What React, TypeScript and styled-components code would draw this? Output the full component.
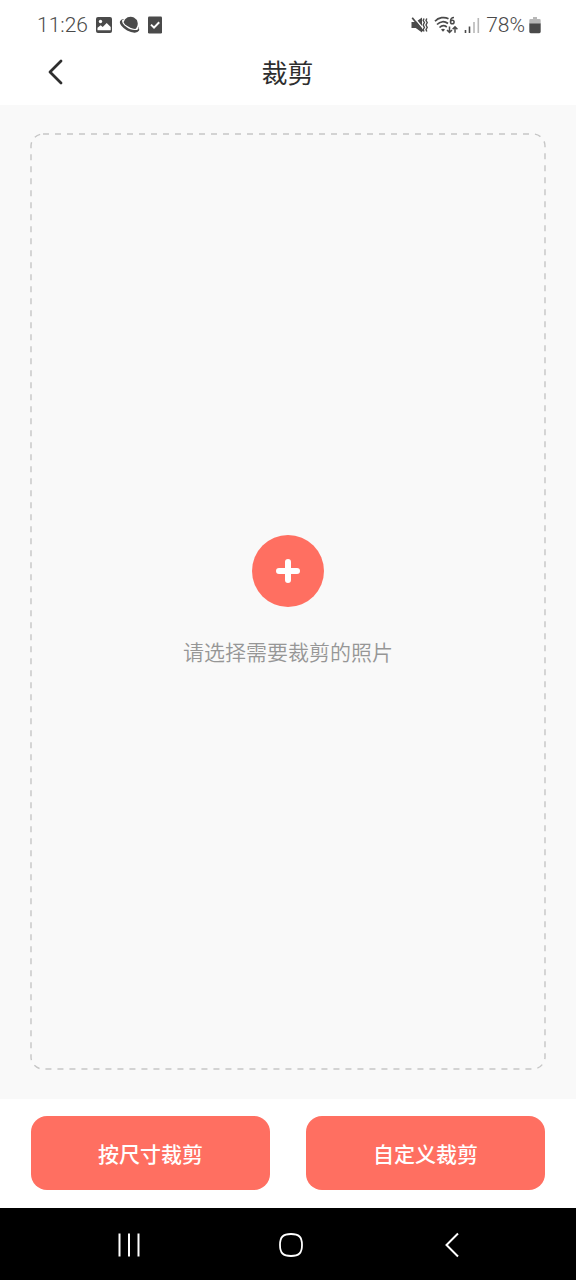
import React from "react";
import styled, { createGlobalStyle } from "styled-components";

const coral = "#ff6f61";
const ink = "#2e2e2e";
const statusInk = "#4a4a4a";

const GlobalStyle = createGlobalStyle`
  *, *::before, *::after { box-sizing: border-box; }
  body {
    margin: 0;
    background: #fff;
    font-family: Roboto, "Noto Sans CJK SC", sans-serif;
  }
  button { font-family: inherit; cursor: pointer; }
  svg { display: block; flex: none; }
`;

const Screen = styled.div`
  display: flex;
  flex-direction: column;
  min-height: 100vh;
  background: #fff;
`;

const StatusBar = styled.div`
  display: flex;
  justify-content: space-between;
  height: 49px;
  padding: 0 35px 0 37px;
  color: ${statusInk};
  font-size: 21px;
  font-weight: 300;
  line-height: 24px;
`;

const StatusGroup = styled.div<{ $gap: number }>`
  display: flex;
  align-items: center;
  gap: ${(p) => p.$gap}px;
`;

const Header = styled.header`
  display: grid;
  grid-template-columns: 48px 1fr 48px;
  align-items: center;
  height: 56px;
  padding: 0 32px 10px 31px;
`;

const BackButton = styled.button`
  display: grid;
  place-items: center;
  width: 48px;
  height: 46px;
  padding: 0;
  border: 0;
  background: none;
  color: ${ink};
`;

const Title = styled.h1`
  margin: 0;
  padding-top: 4px;
  color: ${ink};
  font-size: 26px;
  font-weight: 400;
  line-height: 40px;
  text-align: center;
`;

const Stage = styled.main`
  display: flex;
  flex: 1;
  padding: 28px 30px 29px;
  background: #f9f9f9;
`;

const DropArea = styled.section`
  position: relative;
  display: flex;
  flex: 1;
  flex-direction: column;
  align-items: center;
  justify-content: center;
  gap: 30px;
  padding-top: 1px;
`;

const DashedOutline = styled.svg`
  position: absolute;
  inset: 0;
  width: 100%;
  height: 100%;
  padding: 1px;
  overflow: visible;
  pointer-events: none;
`;

const AddButton = styled.button`
  display: grid;
  place-items: center;
  width: 72px;
  height: 72px;
  padding: 0;
  border: 0;
  border-radius: 50%;
  background: ${coral};
  color: #fff;
`;

const Hint = styled.p`
  margin: 0;
  color: #969696;
  font-size: 21px;
  font-weight: 350;
  line-height: 32px;
`;

const Actions = styled.footer`
  display: flex;
  gap: 36px;
  padding: 17px 31px 18px;
`;

const ActionButton = styled.button`
  flex: 1;
  height: 74px;
  padding: 4px 0 0;
  border: 0;
  border-radius: 16px;
  background: ${coral};
  color: #fff;
  font-size: 21px;
  font-weight: 500;
  line-height: 32px;
`;

const SystemNav = styled.nav`
  display: flex;
  align-items: center;
  justify-content: space-between;
  height: 72px;
  padding: 1px 100px 0 105px;
  background: #000;
`;

const NavButton = styled.button`
  display: grid;
  place-items: center;
  width: 48px;
  height: 48px;
  padding: 0;
  border: 0;
  background: none;
  color: #fff;
`;

const PictureIcon = () => (
  <svg width="18" height="18" viewBox="0 0 18 18" aria-hidden="true">
    <rect x="1" y="1" width="16" height="16" rx="2" fill={statusInk} />
    <circle cx="5.5" cy="5.5" r="1.7" fill="#fff" />
    <path d="M2.5 14.2v-2.4l3.2-2.6 2 1.7 4-4 4 4v3.3z" fill="#fff" />
  </svg>
);

const PlanetIcon = () => (
  <svg width="22" height="18" viewBox="0 0 22 18" aria-hidden="true">
    <g transform="rotate(28 11 9)">
      <ellipse cx="11" cy="10" rx="10.6" ry="5.2" fill={statusInk} />
      <path d="M1.8 8.500C3.500 14 18.500 14 20.200 8.500L18 5H4z" fill="#fff" />
      <path d="M4 9.500C6 11.800 16 11.800 18 9.500A7.200 7.200 0 1 0 4 9.500z" fill={statusInk} />
    </g>
  </svg>
);

const TaskIcon = () => (
  <svg width="16" height="18" viewBox="0 0 16 18" aria-hidden="true">
    <rect x="1" y="0.5" width="14" height="17" rx="1.2" fill={statusInk} />
    <path d="M4 8.600l3 3 5.200-5.400" fill="none" stroke="#fff" strokeWidth="2" />
  </svg>
);

const MutedIcon = () => (
  <svg width="17" height="18" viewBox="0 0 17 18" aria-hidden="true">
    <path d="M.5 6h4.200L11 1.500v15L4.700 12H.5z" fill={statusInk} />
    <path d="M2.800 1.200l9 10.800" stroke="#fff" strokeWidth="1.400" />
    <path d="M1.200 1.700l10.800 13.300" stroke={statusInk} strokeWidth="1.700" />
    <path d="M13 2.500l-.8 2 1.200 2-1.200 2.500 1.200 2.500-1.200 2 .8 2M15.800 2.500l-.8 2 1.200 2L15 9l1.200 2.500-1.200 2 .8 2" fill="none" stroke={statusInk} strokeWidth="1.400" />
  </svg>
);

const WifiIcon = () => (
  <svg width="24" height="18" viewBox="0 0 24 18" fill="none" stroke={statusInk} strokeWidth="1.700" aria-hidden="true">
    <path d="M1 5.300C4.500 1.300 10.500.6 14.500 2.700M3 8.500c3.200-3.300 7.500-3.700 11-1M5.500 11.500c2.200-2.100 5-2.200 7.300-.5" />
    <path d="M7 13.500q2-1.300 4 0l-2 2.300z" fill={statusInk} stroke="none" />
    <path d="M20 1.500c-2.500 0-3.500 2-3.500 4" strokeWidth="1.500" />
    <circle cx="18.300" cy="6" r="1.800" strokeWidth="1.500" />
    <path d="M15.500 10.500v6M13 14l2.500 2.500L18 14M21 16.800v-6M18.600 13.300l2.400-2.500 2.400 2.500" strokeWidth="1.500" />
  </svg>
);

const SignalIcon = () => (
  <svg width="16" height="18" viewBox="0 0 16 18" aria-hidden="true">
    <path d="M1.500 14v3M5.500 10.500V17" stroke={statusInk} strokeWidth="1.600" />
    <path d="M10 6v11M14.300 2v15" stroke="#b8b8b8" strokeWidth="1.600" />
  </svg>
);

const BatteryIcon = () => (
  <svg width="12" height="18" viewBox="0 0 12 18" aria-hidden="true">
    <path d="M4 1h4v2h2.500q1.200 0 1.200 1.200V8H.3V4.200Q.3 3 1.500 3H4z" fill="#b8b8b8" />
    <path d="M.3 7.500h11.400v8.300q0 1.400-1.400 1.400H1.700q-1.400 0-1.400-1.400z" fill={statusInk} />
  </svg>
);

export default function App() {
  return (
    <Screen>
      <GlobalStyle />
      <StatusBar>
        <StatusGroup $gap={7}>
          <span>11:26</span>
          <StatusGroup $gap={6}>
            <PictureIcon />
            <PlanetIcon />
            <TaskIcon />
          </StatusGroup>
        </StatusGroup>
        <StatusGroup $gap={6}>
          <MutedIcon />
          <WifiIcon />
          <SignalIcon />
          <StatusGroup $gap={4}>
            <span>78%</span>
            <BatteryIcon />
          </StatusGroup>
        </StatusGroup>
      </StatusBar>

      <Header>
        <BackButton aria-label="返回">
          <svg width="18" height="28" viewBox="0 0 18 28" fill="none" aria-hidden="true">
            <path d="M15 3L4 14l11 11" stroke="currentColor" strokeWidth="2.800" strokeLinecap="round" strokeLinejoin="round" />
          </svg>
        </BackButton>
        <Title>裁剪</Title>
      </Header>

      <Stage>
        <DropArea>
          <DashedOutline aria-hidden="true">
            <rect width="100%" height="100%" rx="12" fill="none" stroke="#c6c6c6" strokeWidth="1.400" strokeDasharray="6 6" />
          </DashedOutline>
          <AddButton aria-label="添加照片">
            <svg width="24" height="24" viewBox="0 0 24 24" fill="none" aria-hidden="true">
              <path d="M12 3v18M3 12h18" stroke="currentColor" strokeWidth="6" strokeLinecap="round" />
            </svg>
          </AddButton>
          <Hint>请选择需要裁剪的照片</Hint>
        </DropArea>
      </Stage>

      <Actions>
        <ActionButton>按尺寸裁剪</ActionButton>
        <ActionButton>自定义裁剪</ActionButton>
      </Actions>

      <SystemNav aria-label="系统导航">
        <NavButton aria-label="最近任务">
          <svg width="24" height="24" viewBox="0 0 24 24" aria-hidden="true">
            <path d="M2.500 0.500v23M12 0.500v23M21.500 0.500v23" stroke="currentColor" strokeWidth="2" />
          </svg>
        </NavButton>
        <NavButton aria-label="主页">
          <svg width="26" height="26" viewBox="0 0 26 26" aria-hidden="true">
            <path d="M13 2C21 2 24 5 24 13s-3 11-11 11S2 21 2 13 5 2 13 2z" fill="none" stroke="currentColor" strokeWidth="1.800" />
          </svg>
        </NavButton>
        <NavButton aria-label="后退">
          <svg width="16" height="26" viewBox="0 0 16 26" aria-hidden="true">
            <path d="M14 1.500L2.500 13 14 24.500" fill="none" stroke="currentColor" strokeWidth="2" />
          </svg>
        </NavButton>
      </SystemNav>
    </Screen>
  );
}
